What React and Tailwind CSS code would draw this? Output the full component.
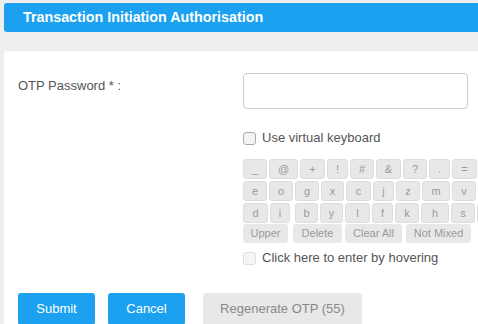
import React from "react";

const rows = [
  [
    ["_", "w-[24px]", "ml-0"],
    ["@", "w-[29px]", "ml-[2px]"],
    ["+", "w-[25px]", "ml-[2px]"],
    ["!", "w-[21px]", "ml-[2px]"],
    ["#", "w-[24px]", "ml-[2px]"],
    ["&", "w-[25px]", "ml-[2px]"],
    ["?", "w-[24px]", "ml-[2px]"],
    [".", "w-[21px]", "ml-[2px]"],
    ["=", "w-[25px]", "ml-[2px]"],
    ["", "w-[24px]", "ml-[2px]"],
  ],
  [
    ["e", "w-[24px]", "ml-0"],
    ["o", "w-[24px]", "ml-[2px]"],
    ["g", "w-[24px]", "ml-[2px]"],
    ["x", "w-[23px]", "ml-[2px]"],
    ["c", "w-[25px]", "ml-[2px]"],
    ["j", "w-[21px]", "ml-[2px]"],
    ["z", "w-[24px]", "ml-[2px]"],
    ["m", "w-[28px]", "ml-[2px]"],
    ["v", "w-[24px]", "ml-[2px]"],
    ["", "w-[24px]", "ml-[2px]"],
  ],
  [
    ["d", "w-[25px]", "ml-0"],
    ["i", "w-[20px]", "ml-[2px]"],
    ["b", "w-[23px]", "ml-[5px]"],
    ["y", "w-[23px]", "ml-[2px]"],
    ["l", "w-[25px]", "ml-[2px]"],
    ["f", "w-[21px]", "ml-[2px]"],
    ["k", "w-[24px]", "ml-[2px]"],
    ["h", "w-[28px]", "ml-[2px]"],
    ["s", "w-[24px]", "ml-[2px]"],
    ["", "w-[24px]", "ml-[2px]"],
  ],
];

const specials = [
  ["Upper", "w-[45px]", "ml-0"],
  ["Delete", "w-[49px]", "ml-[5px]"],
  ["Clear All", "w-[57px]", "ml-[3px]"],
  ["Not Mixed", "w-[65px]", "ml-[4px]"],
];

const Box = ({ faded }) => (
  <span
    className={
      faded
        ? "inline-block w-[13px] h-[13px] rounded-[3px] border border-[#dddddd] bg-[#f5f5f5]"
        : "inline-block w-[13px] h-[13px] rounded-[3px] border border-[#aaaaaa] bg-[#f3f3f3]"
    }
  />
);

const App = () => {
  return (
    <div
      className="h-[324px] w-[478px] overflow-hidden bg-[#eeeeee] pt-[3px] pl-[4px]"
      style={{ fontFamily: '"Liberation Sans", Arial, sans-serif' }}
    >
      <div className="h-[29px] rounded-l-[3px] bg-[#1ba1f0] pl-[19px] flex items-center">
        <h1 className="text-white font-bold text-[14.3px]">
          Transaction Initiation Authorisation
        </h1>
      </div>

      <div className="mt-[19px] h-[300px] rounded-tl-[3px] bg-white pl-[14px] pt-[22px]">
        <div className="flex">
          <label className="w-[225px] pt-[3px] text-[13px] text-[#555555]">
            OTP Password * :
          </label>
          <input
            type="password"
            className="w-[225px] h-[36px] rounded-[4px] border border-[#cccccc] px-2"
          />
        </div>

        <div className="ml-[225px] mt-[19px] flex items-center h-[20px]">
          <Box />
          <span className="ml-[6px] text-[13px] text-[#555555]">
            Use virtual keyboard
          </span>
        </div>

        <div className="ml-[225px] mt-[11px] flex flex-col gap-[2px] w-[300px]">
          {rows.map((row, i) => (
            <div key={i} className="flex">
              {row.map(([k, w, m], j) => (
                <span
                  key={j}
                  className={`${w} ${m} h-[20px] shrink-0 flex items-center justify-center rounded-[3px] border border-[#dddddd] bg-[#e8e8e8] text-[11px] text-[#9a9a9a]`}
                >
                  {k}
                </span>
              ))}
            </div>
          ))}
          <div className="flex -mt-[1px]">
            {specials.map(([k, w, m]) => (
              <span
                key={k}
                className={`${w} ${m} h-[19px] shrink-0 flex items-center justify-center rounded-[3px] bg-[#e8e8e8] text-[11px] text-[#9a9a9a]`}
              >
                {k}
              </span>
            ))}
          </div>
        </div>

        <div className="ml-[225px] mt-[5px] flex items-center h-[20px]">
          <Box faded />
          <span className="ml-[6px] text-[13px] text-[#555555]">
            Click here to enter by hovering
          </span>
        </div>

        <div className="mt-[25px] flex">
          <button className="w-[77px] h-[32px] rounded-[3px] bg-[#1ba1f0] text-white text-[13px]">
            Submit
          </button>
          <button className="ml-[13px] w-[77px] h-[32px] rounded-[3px] bg-[#1ba1f0] text-white text-[13px]">
            Cancel
          </button>
          <button className="ml-[18px] w-[159px] h-[32px] rounded-[3px] bg-[#e8e8e8] text-[#888888] text-[13px]">
            Regenerate OTP (55)
          </button>
        </div>
      </div>
    </div>
  );
};

export default App;
